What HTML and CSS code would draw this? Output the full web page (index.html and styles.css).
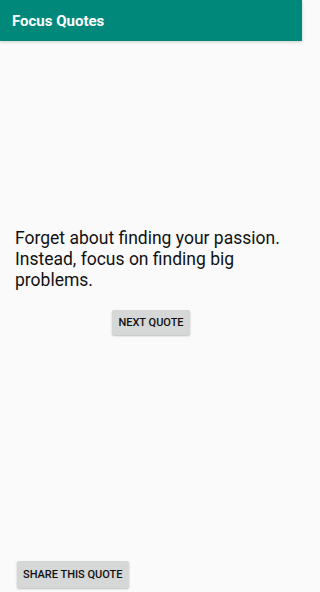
FILE: index.html
```html
<!DOCTYPE html>
<html>
<head>
<meta charset="utf-8">
<link rel="stylesheet" href="styles.css">
</head>
<body>
<div class="app">
  <header class="bar"><span class="title">Focus Quotes</span></header>
  <main class="content">
    <div class="center">
      <p class="quote">Forget about finding your passion. Instead, focus on finding big problems.</p>
      <button class="btn">NEXT QUOTE</button>
    </div>
    <div class="bottom">
      <button class="btn">SHARE THIS QUOTE</button>
    </div>
  </main>
</div>
</body>
</html>
```
FILE: styles.css
```css
html, body { margin: 0; padding: 0; }
body { background: #fafafa; font-family: Roboto, "Noto Sans", sans-serif; }
.app { width: 302px; height: 592px; display: flex; flex-direction: column; }
.bar { height: 41px; flex: none; background: #00897b; display: flex; align-items: center; padding-left: 12px; box-shadow: 0 1px 3px rgba(0,0,0,0.2); }
.title { color: #fff; font-weight: 700; font-size: 15px; }
.content { flex: 1; display: flex; flex-direction: column; }
.center { flex: 1; display: flex; flex-direction: column; padding: 187px 6px 0 15px; }
.quote { margin: 0; font-size: 17.5px; line-height: 21px; color: #111; }
.btn { align-self: center; margin-top: 19px; height: 25px; padding: 0 6px; border: none; border-radius: 2px; background: #d6d7d7; font-family: Roboto, sans-serif; font-weight: 500; font-size: 11px; color: #111; box-shadow: 0 1px 2px rgba(0,0,0,0.25); }
.center .btn { margin-left: -9px; }
.bottom { padding: 0 0 4px 17px; }
.bottom .btn { margin: 0; height: 27px; }
```
